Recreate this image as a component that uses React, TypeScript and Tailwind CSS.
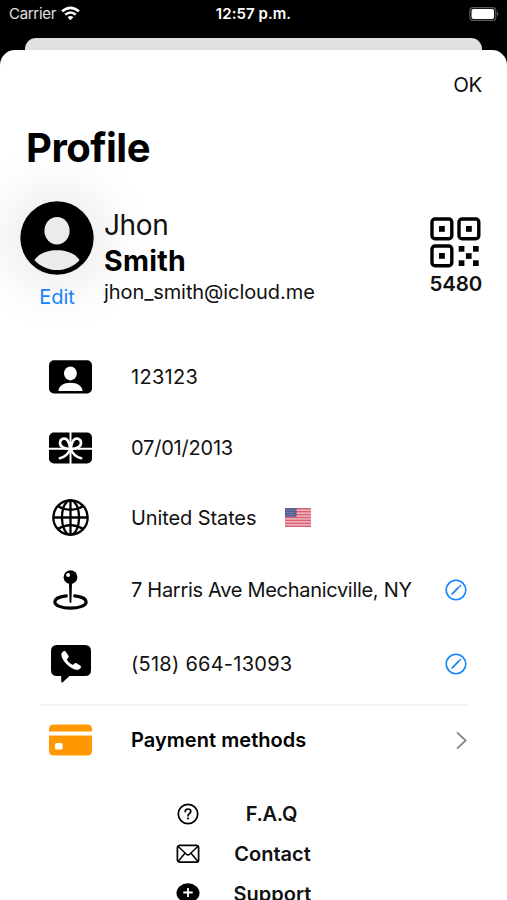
import React from 'react';

interface IconProps {
  className?: string;
}

const WifiIcon = () => (
  <svg width="19" height="15" viewBox="0 0 18 15" preserveAspectRatio="none" className="ml-[5px]">
    <path d="M1 5.4Q9-1.8 17 5.4" fill="none" stroke="white" strokeWidth="2.6" />
    <path d="M4 8.6Q9 4.3 14 8.6" fill="none" stroke="white" strokeWidth="2.5" />
    <path d="M6.2 11.2Q9 8.7 11.8 11.2L9 14.2Z" fill="white" />
  </svg>
);

const BatteryIcon = () => (
  <svg width="30" height="14" viewBox="0 0 30 14">
    <rect x="0.8" y="0.7" width="26" height="12.6" rx="3.4" fill="none" stroke="#5c5c5c" strokeWidth="1.2" />
    <rect x="2.5" y="2.1" width="22.6" height="9.8" rx="2" fill="white" />
    <path d="M28 4.8Q30.6 7 28 9.2Z" fill="#5c5c5c" />
  </svg>
);

const AvatarIcon = () => (
  <svg width="74" height="74" viewBox="0 0 74 74">
    <circle cx="37" cy="37" r="36.7" fill="black" />
    <ellipse cx="37" cy="29.8" rx="12.6" ry="13.8" fill="#ebebeb" />
    <path d="M14.5 59.2C18.5 52.5 27.5 49.3 37 49.3S55.5 52.5 59.5 59.2C53.6 65.4 45.5 69 37 69S20.4 65.4 14.5 59.2Z" fill="#ebebeb" />
  </svg>
);

const QrIcon = () => (
  <svg width="51" height="51" viewBox="0 0 51 51">
    {[[1, 1], [28, 1], [1, 28]].map(([x, y]) => (
      <g key={`${x}-${y}`}>
        <rect x={x + 1} y={y + 1} width="19.8" height="19.8" rx="3" fill="none" stroke="black" strokeWidth="3.4" />
        <rect x={x + 8} y={y + 8} width="5.8" height="5.8" fill="black" />
      </g>
    ))}
    {[[28.7, 29], [43, 29], [35.9, 36.2], [28.7, 43.3], [43, 43.3]].map(([x, y]) => (
      <rect key={`${x}-${y}`} x={x} y={y} width="5.7" height="5.7" fill="black" />
    ))}
  </svg>
);

const IdCardIcon = () => (
  <svg width="43" height="34" viewBox="0 0 43 34">
    <rect y="0.3" width="43" height="33.2" rx="5" fill="black" />
    <ellipse cx="21.4" cy="13.4" rx="6.4" ry="7" fill="white" />
    <path d="M9.4 31C9.8 26 14.5 22.8 21.4 22.8S33.2 26 33.6 31Z" fill="white" />
  </svg>
);

const GiftIcon = () => (
  <svg width="43" height="32" viewBox="0 0 43 32">
    <rect y="0.5" width="43" height="31" rx="5" fill="black" />
    <path d="M21.5 0V32M0 16.8H43" stroke="white" strokeWidth="2" />
    <g fill="black" stroke="white" strokeWidth="2.6" strokeLinecap="round">
      <path d="M21.500 16.800C16 17 10.800 15 11 10.800S16.200 5.300 18.500 8.300C20 10.500 21 13.500 21.500 16.800Z" />
      <path d="M21.500 16.800C27 17 32.200 15 32 10.800S26.800 5.300 24.500 8.300C23 10.500 22 13.500 21.500 16.800Z" />
      <path d="M21.500 16.800C19 22.500 15.500 25.500 10.800 26.300M21.500 16.800C24 22.500 27.500 25.500 32.200 26.300" fill="none" />
    </g>
  </svg>
);

const GlobeIcon = () => (
  <svg width="37" height="37" viewBox="0 0 37 37" fill="none" stroke="black" strokeWidth="2.3">
    <circle cx="18.5" cy="18.5" r="17.200" />
    <ellipse cx="18.5" cy="18.5" rx="8.6" ry="17.200" />
    <path d="M18.5 1.300V35.700M1.300 18.500H35.700" />
    <path d="M5.600 7Q18.500 14.800 31.400 7M5.600 30Q18.500 22.200 31.400 30" />
  </svg>
);

const PinIcon = () => (
  <svg width="35" height="40" viewBox="0.5 0 35 40">
    <path d="M13.8 25.900C7 26.600 2.300 29 2.300 32C2.300 35.500 9.200 38.100 18 38.100S33.700 35.500 33.700 32C33.700 29 29 26.600 22.200 25.900" fill="none" stroke="black" strokeWidth="3.1" strokeLinecap="round" />
    <path d="M16.400 11H19.600L18.900 32Q18 34 17.100 32Z" fill="black" />
    <circle cx="18" cy="7.200" r="6.900" fill="black" />
    <circle cx="15.600" cy="5" r="2" fill="white" />
  </svg>
);

const PhoneBubbleIcon = () => (
  <svg width="40" height="38" viewBox="0 0 40 38">
    <path d="M6 0H34Q40 0 40 6V25Q40 31 34 31H18.500L12 37Q10.200 38.500 10.200 36V31H6Q0 31 0 25V6Q0 0 6 0Z" fill="black" />
    <path d="M12.300 6.500C13.300 5.700 14.200 6 14.900 7L17.300 10.500C18 11.500 17.800 12.300 17 13.100L16.200 14C15.800 14.500 16 15 16.400 15.500C17.400 17 19.400 18.800 21 19.600C21.600 19.900 22 19.900 22.500 19.400L23.500 18.500C24.300 17.900 25 17.800 25.900 18.400L29.200 20.600C30.200 21.300 30.300 22.200 29.400 23.200C28 24.900 26.200 25.200 23.900 24.500C18 22.500 12 16.500 10.600 11.300C10 9.200 10.500 7.800 12.300 6.500Z" fill="white" />
  </svg>
);

const CreditCardIcon = () => (
  <svg width="43" height="32" viewBox="0 0 43 32" fill="#ff9800">
    <path d="M0 7.500V5.500Q0 0.500 5 0.500H38Q43 0.500 43 5.500V7.500Z" />
    <path fillRule="evenodd" d="M0 11.500H43V26.500Q43 31.500 38 31.500H5Q0 31.500 0 26.500ZM7.500 19Q6 19 6 20.500V24Q6 25.500 7.500 25.500H12.100Q13.600 25.500 13.600 24V20.500Q13.600 19 12.100 19Z" />
  </svg>
);

const FlagIcon = ({ className }: IconProps) => (
  <svg width="26" height="19" viewBox="0 0 26 19" className={className}>
    <rect width="26" height="19" fill="#f0bcc3" />
    {[0, 1, 2, 3, 4, 5, 6].map(i => (
      <rect key={i} y={i * 2.92} width="26" height="1.5" fill="#dc6074" />
    ))}
    <rect width="11.5" height="8.8" fill="#565b93" />
    {[2, 4.4, 6.8].map(y => (
      <path key={y} d={`M1.5 ${y}H10`} stroke="#a3a6ca" strokeWidth="0.9" strokeDasharray="1 1" />
    ))}
  </svg>
);

const EditIcon = () => (
  <svg width="22" height="22" viewBox="0 0 22 22" fill="none">
    <circle cx="11" cy="11" r="9.8" stroke="#1684fb" strokeWidth="1.6" />
    <path d="M7.2 14.8L14.3 7.7" stroke="#1684fb" strokeWidth="1.8" />
    <path d="M14.7 7.3L15.8 6.2" stroke="#1684fb" strokeWidth="1.8" />
    <path d="M6 16L6.5 14.3L7.7 15.5Z" fill="#1684fb" />
  </svg>
);

const HelpIcon = () => (
  <svg width="22" height="22" viewBox="0 0 22 22" fill="none" stroke="black" strokeWidth="1.7">
    <circle cx="11" cy="11" r="9.7" />
    <path d="M8.200 8.600C8.300 6.900 9.400 6 11 6S13.800 7 13.800 8.400C13.800 10.500 11 10.500 11 12.800" strokeLinecap="round" />
    <circle cx="11" cy="15.500" r="1.100" fill="black" stroke="none" />
  </svg>
);

const MailIcon = () => (
  <svg width="24" height="20" viewBox="0 0 24 20" fill="none" stroke="black" strokeWidth="1.7">
    <rect x="1.400" y="1.400" width="21.200" height="16.800" rx="2.500" />
    <path d="M2 2.300L10.400 10.200Q12 11.600 13.600 10.200L22 2.300M2 17.500L9 9.300M22 17.500L15 9.300" strokeWidth="1.500" />
  </svg>
);

const PlusBubbleIcon = () => (
  <svg width="24" height="22" viewBox="0 0 24 22">
    <ellipse cx="12" cy="10" rx="11.500" ry="9.700" fill="black" />
    <path d="M12 5V14M7.300 9.500H16.700" stroke="white" strokeWidth="1.800" />
  </svg>
);

interface RowProps {
  icon: React.ReactNode;
  height: string;
  children: React.ReactNode;
  action?: React.ReactNode;
}

const Row: React.FC<RowProps> = ({ icon, height, children, action }) => (
  <div className={`flex items-center ${height}`}>
    <div className="w-[61px] flex justify-center shrink-0">{icon}</div>
    <div className="ml-[30px] flex items-center flex-1 whitespace-nowrap">{children}</div>
    {action}
  </div>
);

const App: React.FC = () => {
  return (
    <div className="w-full h-[900px] bg-black flex flex-col overflow-hidden text-[#111111] font-['Inter','Liberation_Sans',sans-serif]">
      {/* Status bar */}
      <div className="h-[38px] pb-[11px] px-[9px] grid grid-cols-3 items-center text-white text-[15px] leading-none shrink-0">
        <div className="flex items-center">
          <span className="text-[#e0e0e0] tracking-[-0.3px]">Carrier</span>
          <WifiIcon />
        </div>
        <span className="text-center font-semibold tracking-[0.05px] whitespace-nowrap">12:57 p.m.</span>
        <div className="flex justify-end -mr-[1px]">
          <BatteryIcon />
        </div>
      </div>

      {/* Edge of the sheet behind */}
      <div className="h-3 mx-[25px] bg-[#e0e0e0] rounded-t-[11px] shrink-0" />

      <div className="flex-1 bg-white rounded-t-[15px] overflow-hidden">
        <div className="h-[70px] pr-[25px] flex justify-end items-center text-[20.5px]">
          <button className="tracking-[-0.4px]">OK</button>
        </div>
        <h1 className="h-[56px] pl-[26px] flex items-center text-[40px] font-bold text-black tracking-[-0.5px]">Profile</h1>

        {/* User header */}
        <div className="h-[165px] pl-[20px] pr-[25px] pt-[25px] flex">
          <div className="w-[74px] flex flex-col items-center">
            <div className="rounded-full w-[74px] h-[74px] shadow-[0_0_60px_8px_rgba(0,0,0,0.11)]">
              <AvatarIcon />
            </div>
            <button className="mt-[10px] h-6 leading-6 text-[20px] text-[#1a85fa]">Edit</button>
          </div>
          <div className="ml-[10px] pt-[6px] flex flex-col whitespace-nowrap">
            <span className="h-9 leading-9 text-[28px] tracking-[-0.4px]">Jhon</span>
            <span className="h-9 leading-9 text-[28.5px] font-bold text-black tracking-[0.3px]">Smith</span>
            <span className="h-[26px] leading-[26px] text-[20px] tracking-[-0.08px]">jhon_smith@icloud.me</span>
          </div>
          <div className="ml-auto pt-4 flex flex-col items-center">
            <QrIcon />
            <span className="leading-8 text-[20.5px] font-semibold tracking-[-0.2px]">5480</span>
          </div>
        </div>

        {/* Details */}
        <div className="pl-[40px] pr-[40px] text-[20px]">
          <Row icon={<IdCardIcon />} height="h-[71px]">
            <span className="tracking-[0.3px]">123123</span>
          </Row>
          <Row icon={<GiftIcon />} height="h-[71px]">
            <span className="tracking-[-0.2px]">07/01/2013</span>
          </Row>
          <Row icon={<GlobeIcon />} height="h-[69px]">
            <span className="tracking-[-0.1px]">United States</span>
            <FlagIcon className="ml-[29px]" />
          </Row>
          <Row icon={<PinIcon />} height="h-[75px]" action={<EditIcon />}>
            <span className="tracking-[-0.3px]">7 Harris Ave Mechanicville, NY</span>
          </Row>
          <Row icon={<PhoneBubbleIcon />} height="h-[73px]" action={<EditIcon />}>
            <span className="tracking-[0.25px]">(518) 664-13093</span>
          </Row>
          <div className="mt-[4px] h-[2px] bg-[#f3f3f3]" />
          <Row
            icon={<CreditCardIcon />}
            height="h-[68px]"
            action={
              <svg width="11" height="19" viewBox="0 0 11 19" fill="none" stroke="#858585" strokeWidth="1.8">
                <path d="M1 1.300L9.700 9.500L1 17.700" />
              </svg>
            }
          >
            <span className="font-semibold text-black tracking-[0.05px]">Payment methods</span>
          </Row>
        </div>

        {/* Help links */}
        <div className="mt-[20px] pl-[175px] text-[20px] font-semibold text-[#111111]">
          <div className="h-10 flex items-center">
            <div className="w-[25px] flex justify-center"><HelpIcon /></div>
            <span className="w-[143px] text-center tracking-[-0.3px]">F.A.Q</span>
          </div>
          <div className="h-10 flex items-center">
            <div className="w-[25px] flex justify-center"><MailIcon /></div>
            <span className="w-[145px] text-center">Contact</span>
          </div>
          <div className="h-10 flex items-center">
            <div className="w-[25px] flex justify-center"><PlusBubbleIcon /></div>
            <span className="w-[145px] text-center">Support</span>
          </div>
        </div>
      </div>
    </div>
  );
};

export default App;
